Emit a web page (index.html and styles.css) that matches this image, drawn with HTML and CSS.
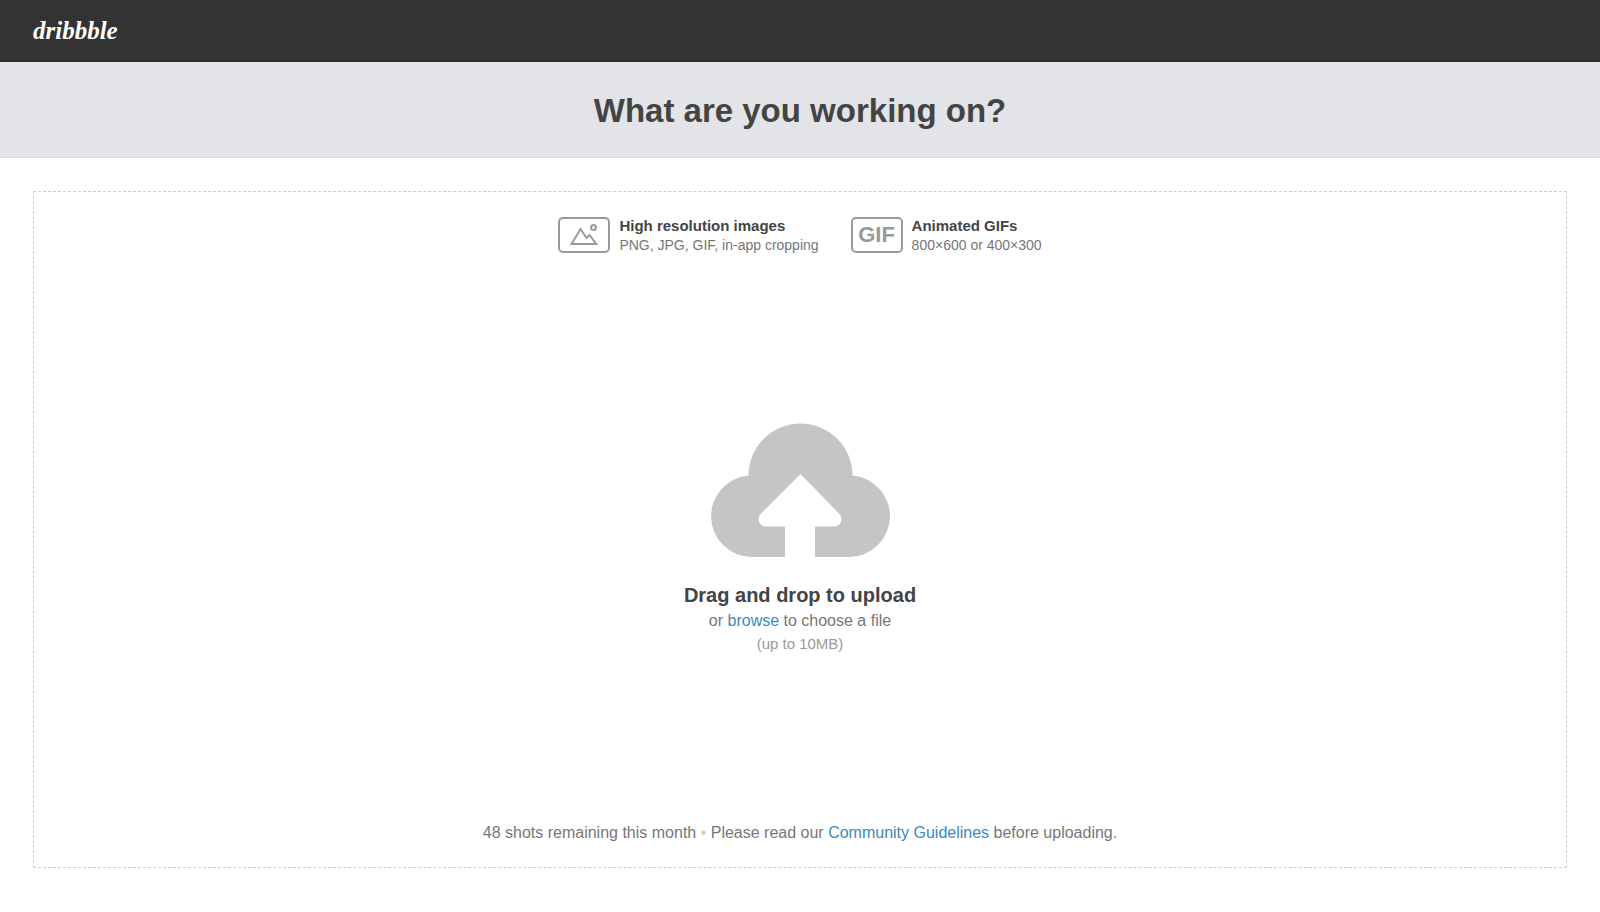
FILE: index.html
```html
<!DOCTYPE html>
<html lang="en">
<head>
<meta charset="utf-8">
<meta name="viewport" content="width=device-width, initial-scale=1">
<title>Dribbble - Upload a shot</title>
<link rel="stylesheet" href="styles.css">
</head>
<body>
<header class="topbar">
  <a class="logo" href="#">dribbble</a>
</header>
<div class="banner"><h1 class="banner-title">What are you working on?</h1></div>
<main class="content">
  <section class="dropzone">
    <ul class="formats">
      <li class="format">
        <span class="format-icon">
          <svg width="28" height="22" viewBox="0 0 28 22" fill="none" stroke="#999" stroke-width="2" aria-hidden="true">
            <path d="M1.500 20L10.500 5L16.500 14L19.500 11L26.200 20Z"/>
            <circle cx="23.500" cy="3.500" r="2.500"/>
          </svg>
        </span>
        <div class="format-text">
          <h2 class="format-title">High resolution images</h2>
          <p class="format-detail">PNG, JPG, GIF, in-app cropping</p>
        </div>
      </li>
      <li class="format">
        <span class="format-icon">GIF</span>
        <div class="format-text">
          <h2 class="format-title">Animated GIFs</h2>
          <p class="format-detail">800×600 or 400×300</p>
        </div>
      </li>
    </ul>
    <div class="upload">
      <svg class="cloud" width="179" height="134" viewBox="0 0 179 134" aria-hidden="true">
        <path fill="#c5c5c5" d="M37.500 52.500A52 52 0 0 1 141.500 52.500A41 41 0 0 1 179 93A41 41 0 0 1 138 134H104V103.500H123A7.500 7.500 0 0 0 128.500 91L89.500 51L49.500 91A7.500 7.500 0 0 0 55 103.500H74V134H41A41 41 0 0 1 0 93A41 41 0 0 1 37.500 52.500Z"/>
      </svg>
      <h2 class="upload-title">Drag and drop to upload</h2>
      <p class="upload-browse">or <a class="link" href="#">browse</a> to choose a file</p>
      <p class="upload-limit">(up to 10MB)</p>
    </div>
    <p class="notice">48 shots remaining this month <span class="dot">•</span> Please read our <a class="link" href="#">Community Guidelines</a> before uploading.</p>
  </section>
</main>
</body>
</html>
```
FILE: styles.css
```css
* { box-sizing: border-box; }
body {
  display: flex;
  flex-direction: column;
  min-height: 100vh;
  margin: 0;
  background: #fff;
  color: #777;
  font-family: "Helvetica Neue", "Liberation Sans", Arial, sans-serif;
}
h1, h2, p, ul { margin: 0; padding: 0; }
.topbar {
  display: flex;
  align-items: center;
  height: 62px;
  padding: 0 33px;
  border-bottom: 1px solid #2a2a2a;
  background: #333;
}
.logo {
  color: #fff;
  font: italic 700 25px/32px "Brush Script MT", "Segoe Script", "Liberation Serif", cursive;
  text-decoration: none;
}
.banner {
  padding: 25px 24px 23px;
  border-bottom: 1px solid #dcdcdc;
  background: #e2e4e8;
  text-align: center;
}
.banner-title {
  color: #444;
  font-size: 33px;
  line-height: 47px;
}
.content {
  display: flex;
  flex: 1;
  padding: 33px 33px 44px;
}
.dropzone {
  display: flex;
  flex: 1;
  flex-direction: column;
  align-items: center;
  justify-content: space-between;
  padding: 24px 24px 22px;
  border: 1px dashed #ccc;
}
.formats {
  display: flex;
  flex-wrap: wrap;
  gap: 32px;
  list-style: none;
}
.format {
  display: flex;
  align-items: center;
  gap: 9px;
}
.format-icon {
  display: flex;
  align-items: center;
  justify-content: center;
  width: 52px;
  height: 36px;
  border: 2px solid #999;
  border-radius: 5px;
  color: #999;
  font-size: 22px;
  font-weight: 700;
}
.format-title {
  color: #444;
  font-size: 15px;
  line-height: 20px;
}
.format-detail {
  font-size: 14px;
  line-height: 18px;
}
.upload {
  display: flex;
  flex-direction: column;
  align-items: center;
  padding-top: 3px;
}
.cloud { margin-bottom: 24px; }
.upload-title {
  color: #444;
  font-size: 20px;
  line-height: 28px;
}
.upload-browse {
  font-size: 16px;
  line-height: 24px;
}
.upload-limit {
  color: #999;
  font-size: 15px;
  line-height: 22px;
}
.notice {
  font-size: 16px;
  line-height: 24px;
}
.dot { color: #ccc; }
.link {
  color: #3a8bbb;
  text-decoration: none;
}
.link:hover { text-decoration: underline; }
```
